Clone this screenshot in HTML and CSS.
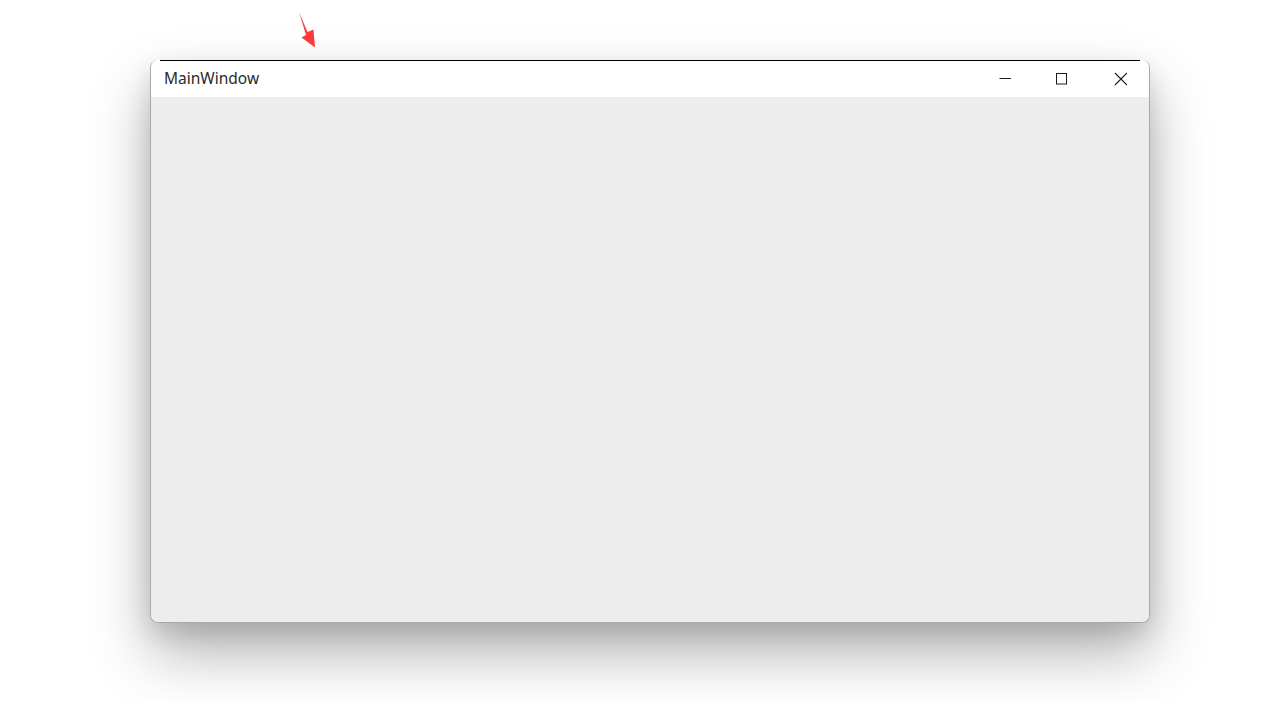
FILE: index.html
```html
<!DOCTYPE html>
<html>
<head>
<meta charset="utf-8">
<link rel="stylesheet" href="styles.css">
</head>
<body>
<div class="desktop">
  <svg class="pointer" width="20" height="50" viewBox="0 0 20 50">
    <polygon points="1,12 9.5,32 15.5,29.5 17,47.5 3.5,37.5 8,35" fill="#ff3b3b"/>
  </svg>
  <div class="window">
    <div class="titlebar">
      <span class="title">MainWindow</span>
      <div class="controls">
        <div class="btn">
          <svg width="14" height="14" viewBox="0 0 14 14"><line x1="2.5" y1="6.5" x2="14" y2="6.5" stroke="#1a1a1a" stroke-width="1"/></svg>
        </div>
        <div class="btn">
          <svg width="14" height="14" viewBox="0 0 14 14"><rect x="1.5" y="1.5" width="10" height="10.5" fill="none" stroke="#1a1a1a" stroke-width="1"/></svg>
        </div>
        <div class="btn">
          <svg width="14" height="14" viewBox="0 0 14 14"><path d="M2 1 L14 13 M14 1 L2 13" stroke="#1a1a1a" stroke-width="1.1"/></svg>
        </div>
      </div>
    </div>
    <div class="content"></div>
  </div>
</div>
</body>
</html>
```
FILE: styles.css
```css
html, body {
  margin: 0;
  padding: 0;
  background: #ffffff;
  width: 1276px;
  height: 702px;
  overflow: hidden;
}
.desktop {
  position: relative;
  width: 1276px;
  height: 702px;
  padding: 60px 0 0 150px;
  box-sizing: border-box;
}
.pointer {
  position: absolute;
  left: 298px;
  top: 0px;
  width: 20px;
  height: 50px;
}
.window {
  width: 1000px;
  height: 563px;
  box-sizing: border-box;
  border: 1px solid #a8a8a8;
  border-top: none;
  border-radius: 8px;
  background: #ededed;
  display: flex;
  flex-direction: column;
  box-shadow: 0 30px 60px rgba(0,0,0,0.3), 0 10px 24px rgba(0,0,0,0.12);
  position: relative;
  overflow: hidden;
}
.window::before {
  content: "";
  position: absolute;
  left: 9px;
  right: 9px;
  top: 0;
  height: 1px;
  background: #000;
}
.titlebar {
  height: 37px;
  background: #ffffff;
  display: flex;
  align-items: center;
  justify-content: space-between;
  flex-shrink: 0;
}
.title {
  font-family: "Noto Sans", sans-serif;
  font-size: 15.5px;
  color: #2b2b2b;
  padding-left: 13px;
  padding-bottom: 1px;
}
.controls {
  display: flex;
  height: 100%;
}
.btn {
  width: 58px;
  height: 100%;
  display: flex;
  align-items: center;
  justify-content: center;
}
.btn svg { display: block; }
.content {
  flex: 1;
  background: #ededed;
}
```
